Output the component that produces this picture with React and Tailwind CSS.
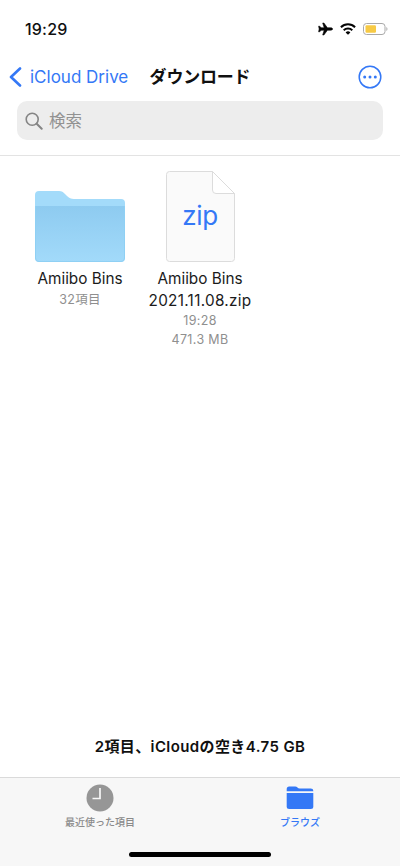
import React from 'react';

function StatusBar() {
  return (
    <div className="flex h-[58px] items-center justify-between pr-[12px] pl-[25px]">
      <span className="text-[16px] leading-5 font-medium tracking-[0.2px]">19:29</span>
      <div className="flex items-center gap-[7px]">
        <svg width="15" height="14" viewBox="0 0 15 14" fill="#050505" stroke="#050505" strokeWidth=".6" strokeLinejoin="round">
          <path d="M14.600 7c0-.8-1-1.200-2-1.200H9.400L5.900 1H4.700L6.200 5.800H3.200L1.700 4.200H.6L1.200 7 .6 9.800h1.100l1.500-1.600h3L4.700 13h1.200l3.500-4.800h3.200c1 0 2-.4 2-1.200z" />
        </svg>
        <svg width="16" height="12" viewBox="0 0 16 12" fill="none" stroke="#050505" strokeWidth="2">
          <path d="M.9 4.200a10.200 10.200 0 0 1 14.200 0" />
          <path d="M3.700 7.200a6.200 6.200 0 0 1 8.600 0" />
          <path d="M8 11.800 5.600 9.400a3.500 3.500 0 0 1 4.800 0z" fill="#050505" stroke="none" />
        </svg>
        <svg width="25" height="12" viewBox="0 0 25 12">
          <rect x=".5" y=".5" width="21.5" height="11" rx="3" fill="#fff" stroke="#a9a9a9" />
          <rect x="2.5" y="2.3" width="10.5" height="7.4" rx="1.2" fill="#f7ca45" />
          <path d="M23.3 4v4c1.6-.6 1.6-3.4 0-4z" fill="#b0b0b0" />
        </svg>
      </div>
    </div>
  );
}

function NavBar() {
  return (
    <div className="grid h-[38px] grid-cols-[140px_120px_140px] items-center">
      <div className="flex items-center gap-[8px] pl-[9px] text-[#3478f6]">
        <svg width="13" height="20" viewBox="0 0 13 20" fill="none" stroke="currentColor" strokeWidth="2.6" strokeLinecap="round" strokeLinejoin="round">
          <path d="M11 1.5 2 10l9 8.5" />
        </svg>
        <span className="text-[17px] leading-6 whitespace-nowrap">iCloud Drive</span>
      </div>
      <h1 className="text-center text-[17px] leading-6 font-bold tracking-[-0.2px] whitespace-nowrap">ダウンロード</h1>
      <div className="flex justify-end pr-[18px]">
        <svg width="24" height="24" viewBox="0 0 24 24" fill="#3478f6">
          <circle cx="12" cy="12" r="10.8" fill="none" stroke="#3478f6" strokeWidth="1.5" />
          <circle cx="6.7" cy="12" r="1.5" />
          <circle cx="12" cy="12" r="1.5" />
          <circle cx="17.3" cy="12" r="1.5" />
        </svg>
      </div>
    </div>
  );
}

function SearchField() {
  return (
    <div className="mx-[17px] mt-[5px] flex h-[39px] items-center gap-[6px] rounded-[10px] bg-[#ededed] pl-[8px]">
      <svg width="18" height="18" viewBox="0 0 18 18" fill="none" stroke="#858585" strokeWidth="1.6" strokeLinecap="round">
        <circle cx="7.2" cy="7.2" r="6" />
        <path d="m11.7 11.7 5 5" strokeWidth="2" />
      </svg>
      <span className="text-[16.5px] leading-6 text-[#929292]">検索</span>
    </div>
  );
}

function Folder() {
  return (
    <svg width="90" height="71" viewBox="0 0 90 71">
      <defs>
        <linearGradient id="folder-front" x1="0" y1="0" x2="0" y2="1">
          <stop offset="0" stopColor="#8ecbf0" />
          <stop offset="1" stopColor="#a2dafa" />
        </linearGradient>
      </defs>
      <path d="M0 67V4q0-4 4-4h20c3 0 4 1 6 3l2 2c2 2 4 3 7 3h47q4 0 4 4v55q0 4-4 4H4q-4 0-4-4z" fill="#a3dbfa" />
      <path d="M.6 15h88.8v52q0 3.4-3.4 3.4H4Q.6 70.4.6 67z" fill="url(#folder-front)" />
      <path d="M.5 15v52q0 3.5 3.5 3.5h82q3.500 0 3.500-3.500V15" fill="none" stroke="#8fd0f4" strokeWidth="1" />
    </svg>
  );
}

function ZipDocument() {
  return (
    <div className="relative flex h-[91px] w-[69px] justify-center pt-[28px]">
      <svg className="absolute inset-0" width="69" height="91" viewBox="0 0 69 91" stroke="#dcdcdc" strokeLinejoin="round">
        <path d="M.5 87.500V3.500q0-3 3-3h43l22 22v65q0 3-3 3h-62q-3 0-3-3z" fill="#fafafa" />
        <path d="M46.500.5V19q0 3.500 3.500 3.500h18.500z" fill="#fff" />
      </svg>
      <span className="relative text-[26px] leading-[34px] tracking-[-0.3px] text-[#3478f6]">zip</span>
    </div>
  );
}

function FileItem({ icon, name, details }) {
  return (
    <div className="flex w-[120px] flex-col items-center text-center">
      <div className="flex h-[91px] items-end">{icon}</div>
      <div className="mt-[6px] text-[15.3px] leading-[21.5px] whitespace-nowrap text-[#1b1b1b]">
        <div>{name[0]}</div>
        {name[1] && <div className="tracking-[0.3px]">{name[1]}</div>}
      </div>
      <div className="text-[12.5px] leading-[19px] tracking-[0.35px] whitespace-nowrap text-[#8f8f8f]">
        {details.map((line) => <div key={line}>{line}</div>)}
      </div>
    </div>
  );
}

function TabBar() {
  return (
    <nav className="flex h-[89px] flex-col border-t border-[#dadada] bg-[#f7f7f7]">
      <div className="grid grid-cols-2 pt-[6px] leading-[16px]">
        <div className="flex flex-col items-center text-[#8a8a8a]">
          <svg width="28" height="28" viewBox="0 0 28 28">
            <circle cx="14" cy="14" r="13.500" fill="#969696" />
            <path d="M14 4V14.500H6.500" fill="none" stroke="#f7f7f7" strokeWidth="1.700" />
          </svg>
          <span className="mt-[2px] text-[10px] font-medium">最近使った項目</span>
        </div>
        <div className="flex flex-col items-center text-[#3478f6]">
          <svg width="28" height="28" viewBox="0 0 28 28" fill="currentColor">
            <path d="M.7 7.200V5q0-2.500 2.500-2.500h6c2 0 2.500 2 4.500 2h11q2.600 0 2.600 2.200v.5z" />
            <path d="M.7 9h26.600v13.500q0 2.500-2.500 2.500H3.200Q.7 25 .7 22.500z" />
          </svg>
          <span className="mt-[2px] text-[10px] font-medium">ブラウズ</span>
        </div>
      </div>
      <div className="mx-auto mt-auto mb-[9px] h-[5px] w-[142px] rounded-full bg-black" />
    </nav>
  );
}

export default function App() {
  return (
    <div className="flex h-[866px] w-[400px] flex-col overflow-hidden bg-white font-['Inter','Noto_Sans_CJK_JP',sans-serif] text-[#101010]" lang="ja">
      <header className="h-[156px] border-b border-[#e3e3e3]">
        <StatusBar />
        <NavBar />
        <SearchField />
      </header>
      <main className="flex flex-1 flex-col">
        <div className="flex items-start px-[20px] pt-[15px]">
          <FileItem icon={<Folder />} name={['Amiibo Bins']} details={['32項目']} />
          <FileItem icon={<ZipDocument />} name={['Amiibo Bins', '2021.11.08.zip']} details={['19:28', '471.3 MB']} />
        </div>
        <p className="mt-auto mb-[18px] text-center text-[15px] leading-6 font-semibold tracking-[0.4px]">2項目、iCloudの空き4.75 GB</p>
      </main>
      <TabBar />
    </div>
  );
}
